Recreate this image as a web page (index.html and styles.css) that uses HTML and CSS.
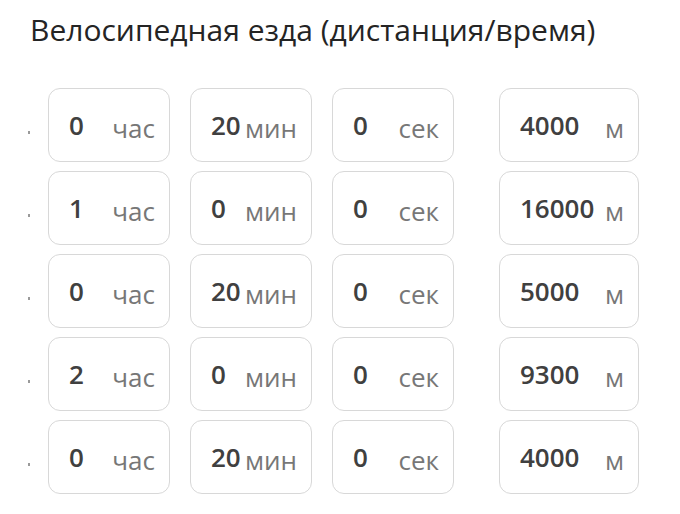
FILE: index.html
```html
<!DOCTYPE html>
<html lang="ru">
<head>
<meta charset="utf-8">
<link rel="stylesheet" href="styles.css">
</head>
<body>
<h1 class="title">Велосипедная езда (дистанция/время)</h1>
<div class="rows">
  <div class="row">
    <span class="dot"></span>
    <div class="field"><span class="num">0</span><span class="unit">час</span></div>
    <div class="field"><span class="num">20</span><span class="unit">мин</span></div>
    <div class="field"><span class="num">0</span><span class="unit">сек</span></div>
    <div class="field dist"><span class="num">4000</span><span class="unit">м</span></div>
  </div>
  <div class="row">
    <span class="dot"></span>
    <div class="field"><span class="num">1</span><span class="unit">час</span></div>
    <div class="field"><span class="num">0</span><span class="unit">мин</span></div>
    <div class="field"><span class="num">0</span><span class="unit">сек</span></div>
    <div class="field dist"><span class="num">16000</span><span class="unit">м</span></div>
  </div>
  <div class="row">
    <span class="dot"></span>
    <div class="field"><span class="num">0</span><span class="unit">час</span></div>
    <div class="field"><span class="num">20</span><span class="unit">мин</span></div>
    <div class="field"><span class="num">0</span><span class="unit">сек</span></div>
    <div class="field dist"><span class="num">5000</span><span class="unit">м</span></div>
  </div>
  <div class="row">
    <span class="dot"></span>
    <div class="field"><span class="num">2</span><span class="unit">час</span></div>
    <div class="field"><span class="num">0</span><span class="unit">мин</span></div>
    <div class="field"><span class="num">0</span><span class="unit">сек</span></div>
    <div class="field dist"><span class="num">9300</span><span class="unit">м</span></div>
  </div>
  <div class="row">
    <span class="dot"></span>
    <div class="field"><span class="num">0</span><span class="unit">час</span></div>
    <div class="field"><span class="num">20</span><span class="unit">мин</span></div>
    <div class="field"><span class="num">0</span><span class="unit">сек</span></div>
    <div class="field dist"><span class="num">4000</span><span class="unit">м</span></div>
  </div>
</div>
</body>
</html>
```
FILE: styles.css
```css
html, body {
  margin: 0;
  padding: 0;
  background: #ffffff;
  font-family: "Open Sans", "Noto Sans", sans-serif;
}
.title {
  margin: 0;
  padding: 10px 0 0 30px;
  font-size: 30px;
  line-height: 40px;
  font-weight: 400;
  color: #242424;
}
.rows {
  display: flex;
  flex-direction: column;
  gap: 9px;
  padding-top: 38px;
}
.row {
  display: flex;
  align-items: center;
  padding-left: 28px;
}
.dot {
  width: 2px;
  height: 3px;
  background: #9a9a9a;
  margin-right: 18px;
  margin-top: 14px;
}
.field {
  box-sizing: border-box;
  width: 122px;
  height: 74px;
  border: 1.5px solid #d8d8d8;
  border-radius: 12px;
  display: flex;
  align-items: center;
  justify-content: space-between;
  padding: 0 14px 0 20px;
  margin-right: 20px;
}
.field:nth-child(4) {
  margin-right: 45px;
}
.field.dist {
  width: 140px;
  margin-right: 0;
}
.num {
  font-size: 26px;
  font-weight: 600;
  color: #404040;
}
.unit {
  font-size: 26px;
  font-weight: 400;
  color: #777777;
  padding-top: 5px;
}
```
